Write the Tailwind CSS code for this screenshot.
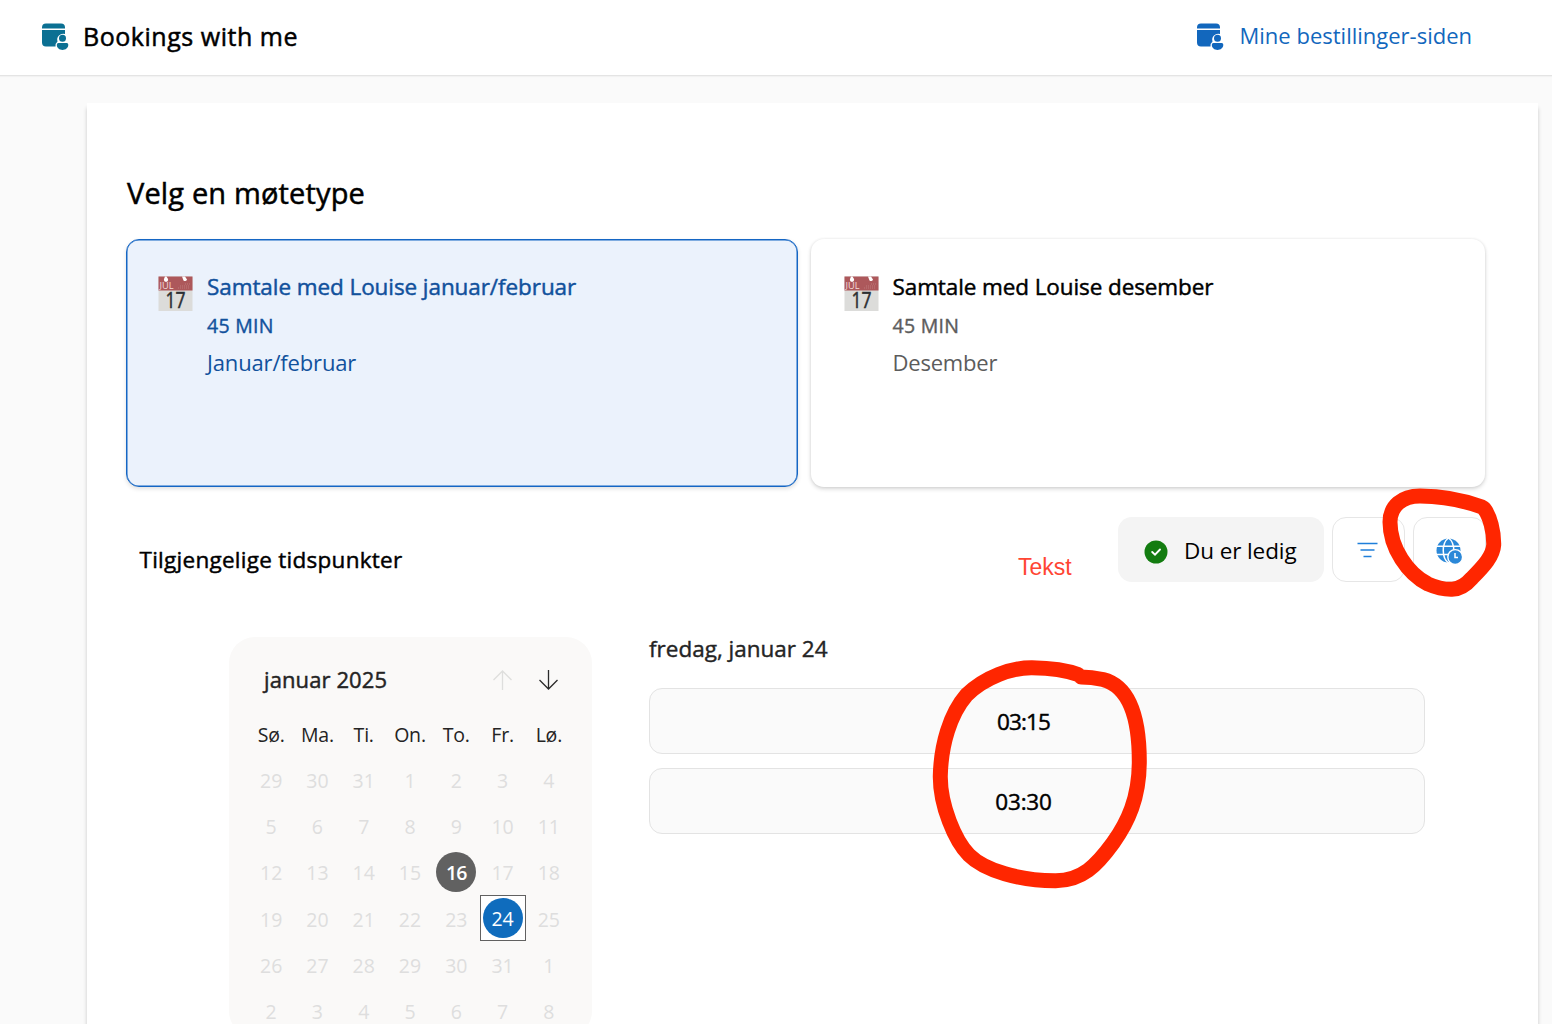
<!DOCTYPE html>
<html lang="nb">
<head>
<meta charset="utf-8">
<title>Bookings with me</title>
<script src="https://cdn.jsdelivr.net/npm/@tailwindcss/browser@4"></script>
</head>
<body class="relative h-[1024px] w-[1552px] overflow-hidden bg-[#fafafa] font-['Open_Sans',sans-serif] text-[22.5px] text-black">
<svg class="hidden">
  <symbol id="bookings" viewBox="0 0 28 28">
    <path fill="currentColor" d="M1 5.5V4.500A4 4 0 0 1 5 .5H20A4 4 0 0 1 24 4.500V5.500ZM1 7H24V11A6 6 0 0 0 16.500 18.500Q14.500 20 14.500 23.500H5A4 4 0 0 1 1 19.500Z"/>
    <circle cx="21.500" cy="15.200" r="3.500" fill="currentColor"/>
    <path fill="currentColor" d="M17.500 20H25.500A1.700 1.700 0 0 1 27.300 21.800C27.300 25 24.500 27 21.500 27S15.800 25 15.800 21.800A1.700 1.700 0 0 1 17.500 20Z"/>
  </symbol>
  <symbol id="date" viewBox="0 0 35 35">
    <path fill="#dcdcda" d="M.5 .5H34.500V35H.5Z"/>
    <path fill="#ad585b" d="M.5 .5H34.500V14.500H.5Z"/>
    <path fill="#fff" d="M7 .5H8.500L10 3A2.100 2.100 0 1 1 6 3ZM24 .5H27L29 3.500A2.100 2.100 0 0 1 25.500 4.500Z"/>
    <path stroke="#bd7a7c" stroke-width="1" stroke-dasharray="1 1" d="M20 12H32M22 10H32M27 8H33"/>
    <text x="1.500" y="13" font-size="9.500" textLength="14" lengthAdjust="spacingAndGlyphs" fill="#f3dcdc">JUL</text>
    <text x="7.500" y="32" font-size="21" textLength="20" lengthAdjust="spacingAndGlyphs" fill="#2c2f33" stroke="#2c2f33" stroke-width=".5">17</text>
  </symbol>
</svg>

<header class="flex h-[76px] items-center border-b border-[#e4e4e4] bg-white pr-[80px] pl-[41px] shadow-[0_1px_1px_rgba(0,0,0,0.03)]">
  <svg class="-mt-[2px] size-7 text-[#0b7093]"><use href="#bookings"/></svg>
  <h1 class="-mt-[4px] ml-[14px] text-[25px] leading-8 tracking-[0.53px] whitespace-nowrap [-webkit-text-stroke:0.5px]">Bookings with me</h1>
  <a class="ml-auto flex items-center text-[#1267bd]">
    <svg class="-mt-[2px] size-7"><use href="#bookings"/></svg>
    <span class="-mt-[5px] ml-[16px] text-[22px] whitespace-nowrap">Mine bestillinger-siden</span>
  </a>
</header>

<main class="mt-[27px] ml-[87px] h-[960px] w-[1451px] bg-white px-[39px] shadow-[0_5px_4px_rgba(0,0,0,0.2)]">
  <h2 class="pt-[69px] pl-px text-[29px] leading-[42px] tracking-[0.15px] [-webkit-text-stroke:0.5px]">Velg en møtetype</h2>
  <div class="mt-[25px] flex gap-[13px]">
    <section class="flex h-[248px] w-[672px] gap-[14px] rounded-[13px] border border-[#1566c4] bg-[#ebf2fc] pt-[36px] pl-[31px] text-[#11519c] shadow-[inset_0_0_0_0.5px_#1566c4,0_2px_4px_rgba(0,0,0,0.12)]">
      <svg class="size-[35px]"><use href="#date"/></svg>
      <div class="-mt-px">
        <h3 class="leading-[23px] tracking-[-0.08px] [-webkit-text-stroke:0.45px]">Samtale med Louise januar/februar</h3>
        <p class="mt-[16px] text-[19.5px] leading-[23px] tracking-[0.3px] [-webkit-text-stroke:0.4px]">45 MIN</p>
        <p class="mt-[13px] text-[22px] leading-[24px] tracking-[-0.15px]">Januar/februar</p>
      </div>
    </section>
    <section class="flex h-[248px] w-[674px] gap-[14px] rounded-[13px] bg-white pt-[37px] pl-[32.5px] shadow-[0_0_3px_rgba(0,0,0,0.08),0_2px_4px_rgba(0,0,0,0.16)]">
      <svg class="size-[35px]"><use href="#date"/></svg>
      <div class="-mt-px">
        <h3 class="leading-[23px] tracking-[-0.1px] [-webkit-text-stroke:0.45px]">Samtale med Louise desember</h3>
        <p class="mt-[16px] text-[19.5px] leading-[23px] tracking-[0.3px] text-[#5c5c5c] [-webkit-text-stroke:0.4px]">45 MIN</p>
        <p class="mt-[13px] text-[22px] leading-[24px] tracking-[-0.2px] text-[#5c5c5c]">Desember</p>
      </div>
    </section>
  </div>

  <div class="mt-[30px] flex h-[65px] gap-2 pr-[13px] pl-[13.5px]">
    <h2 class="mr-auto pt-[28px] leading-[30px] tracking-[0.27px] [-webkit-text-stroke:0.45px]">Tilgjengelige tidspunkter</h2>
    <div class="flex w-[206px] items-center gap-[16px] rounded-[14px] bg-[#f4f4f4] pl-[26px]">
      <svg class="mt-[4px] size-6" viewBox="0 0 24 24" fill="none"><circle cx="12" cy="12" r="11.500" fill="#137c10"/><path d="M8.200 12L11 14.600L16 9.500" stroke="#fff" stroke-width="1.900" stroke-linecap="round"/></svg>
      <span class="mt-[3px] tracking-[-0.1px]">Du er ledig</span>
    </div>
    <button class="flex w-[73px] items-center justify-center rounded-[14px] border border-[#e6e6e6]">
      <svg class="mt-px mr-px h-4 w-[22px]" viewBox="0 0 22 16" stroke="#1f7fda" stroke-width="1.500"><path d="M.5 1.500H20.500M3.500 8H17.500M6.500 14.500H14.500"/></svg>
    </button>
    <button class="flex w-[73px] items-center justify-center rounded-[14px] border border-[#e6e6e6]">
      <svg class="mt-[4px] size-[27px]" viewBox="0 0 27 27" fill="none"><circle cx="12.500" cy="12.500" r="12" fill="#2b88d8"/><path stroke="#fff" stroke-width="1.500" d="M0 8.300H25M0 16.500H25M12.500 0C5.500 5 5.500 20 12.500 25C19.500 20 19.500 5 12.500 0Z"/><circle cx="19.200" cy="19" r="7.400" fill="#2b88d8" stroke="#fff" stroke-width="1.400"/><path d="M19 15V19.400H22" stroke="#fff" stroke-width="1.500"/></svg>
    </button>
  </div>

  <div class="mt-[55px] flex gap-[57px] pl-[103px]">
    <section class="h-[400px] w-[363px] rounded-[26px] bg-[#faf9f8] pt-[20px] pl-[19px] text-[19.500px]">
      <div class="flex h-[46px] items-center pl-[16px]">
        <h3 class="-mt-px w-[229px] text-[22px] tracking-[0.1px] text-[#242424] [-webkit-text-stroke:0.45px]">januar 2025</h3>
        <svg class="size-5" viewBox="0 0 20 20" fill="none" stroke="#dededd" stroke-width="1.300"><path d="M9.500 20V1M.5 10L9.500 1L18.500 10"/></svg>
        <svg class="ml-[26px] size-5" viewBox="0 0 20 20" fill="none" stroke="#2b2b2b" stroke-width="1.300"><path d="M9.500 0V19M.5 10L9.500 19L18.500 10"/></svg>
      </div>
      <div id="days" class="mt-[8px] grid w-[324px] auto-rows-[46.3px] grid-cols-7 items-center text-center text-[#dedede]"></div>
    </section>
    <section class="w-[776px]">
      <h3 class="leading-[24px] text-[#242424] [-webkit-text-stroke:0.4px]">fredag, januar 24</h3>
      <div class="mt-[27px] flex flex-col gap-[14px] [-webkit-text-stroke:0.45px]">
        <button class="h-[66px] rounded-[13px] border border-[#e3e3e3] bg-[#fafafa] pt-[2px] pr-[27px] tracking-[-0.9px]">03:15</button>
        <button class="h-[66px] rounded-[13px] border border-[#e3e3e3] bg-[#fafafa] pt-[2px] pr-[27px] tracking-[-0.2px]">03:30</button>
      </div>
    </section>
  </div>
</main>

<!-- hand-drawn notes on top of the page -->
<span class="absolute top-[553px] left-[1018px] font-['Liberation_Sans',sans-serif] text-[23px] leading-[28px] text-[#ff4533]">Tekst</span>
<svg class="pointer-events-none absolute inset-0 h-[1024px] w-[1552px]" fill="none" stroke="#ff2600" stroke-width="15" stroke-linecap="round" stroke-linejoin="round">
  <path d="M1482 507C1460 499 1436 496 1420 496C1402 496 1390 506 1390 522C1390 548 1408 574 1428 584C1437 588 1444 589.500 1452 589.300C1460 589 1466 585 1472 578C1484 566 1493 556 1493.700 545C1494 532 1490 516 1484 508.500"/>
  <path d="M1078 674.500C1066 670 1050 668 1032 667.700C1012 667.500 985 677 966.500 695C950 714 941 745 940.300 776C940 805 955 841 969 855C985 871 1020 880.500 1055 880.700C1082 881 1097 865 1113 843C1128 822 1139 798 1139.300 763C1139.500 725 1132 687 1103 679.500C1096 678 1088 677 1081 677"/>
</svg>
<script>
  const names = ['Sø.', 'Ma.', 'Ti.', 'On.', 'To.', 'Fr.', 'Lø.'];
  const grid = document.getElementById('days');
  let html = names.map(n => `<span class="text-[#242424] tracking-[-0.2px]">${n}</span>`).join('');
  for (let i = 0; i < 42; i++) {
    const d = new Date(2024, 11, 29 + i), n = d.getDate(), jan = d.getMonth() === 0;
    if (jan && n === 16) html += '<span class="mx-auto flex size-10 -translate-y-px items-center justify-center rounded-full bg-[#616161] pt-px font-semibold tracking-[-0.8px] text-white">16</span>';
    else if (jan && n === 24) html += '<span class="mx-auto flex size-[46px] -translate-y-px items-center justify-center border border-[#616161] bg-white"><span class="flex size-10 items-center justify-center rounded-full bg-[#0f6cbd] pt-px text-white">24</span></span>';
    else html += `<span>${n}</span>`;
  }
  grid.innerHTML = html;
</script>
</body>
</html>
